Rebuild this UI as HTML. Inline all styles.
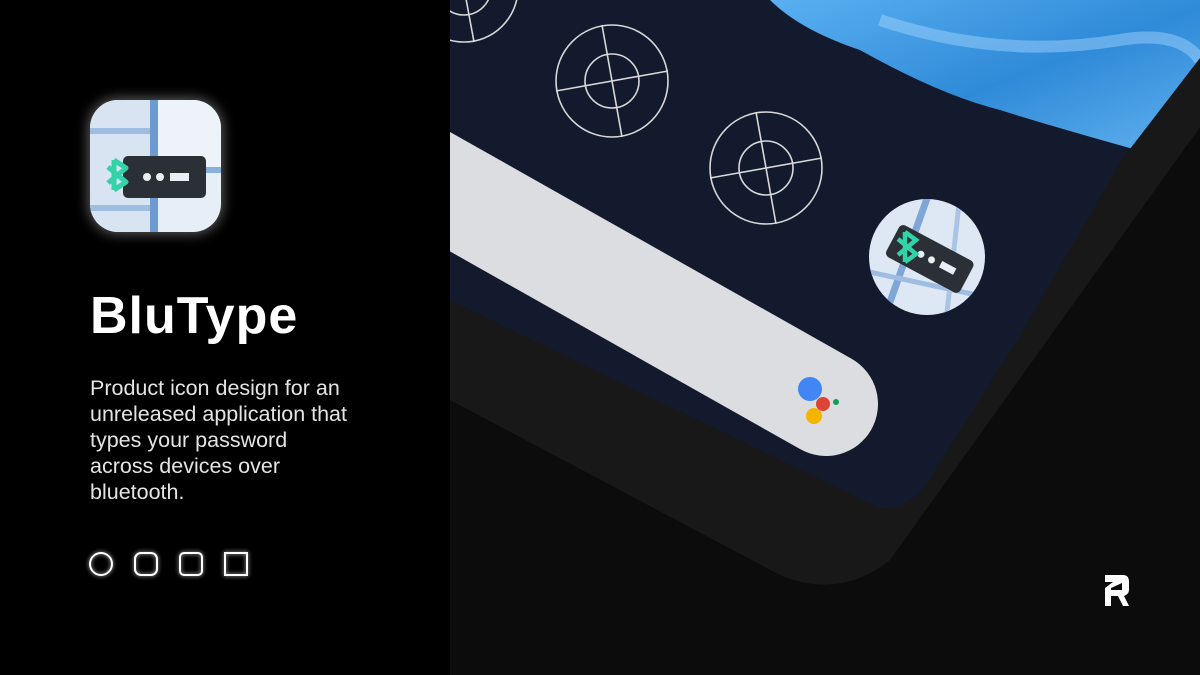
<!DOCTYPE html>
<html><head><meta charset="utf-8"><style>
*{margin:0;padding:0;box-sizing:border-box}
body{width:1200px;height:675px;overflow:hidden;background:#0c0c0c;font-family:"Liberation Sans",sans-serif;position:relative}
#left{position:absolute;left:0;top:0;width:450px;height:675px;background:#000}
h1{position:absolute;left:90px;top:286px;font-size:52px;font-weight:bold;color:#fff;letter-spacing:1px}
p{position:absolute;left:90px;top:375px;width:300px;font-size:21.5px;line-height:26px;color:#e4e4e4;white-space:nowrap}
</style></head><body>
<div id="left">
<svg width="450" height="675" style="position:absolute;left:0;top:0">
<defs>
<filter id="g" x="-50%" y="-50%" width="200%" height="200%"><feGaussianBlur stdDeviation="6"/></filter>
<filter id="g2" x="-50%" y="-50%" width="200%" height="200%"><feGaussianBlur stdDeviation="2"/></filter>
<clipPath id="ic"><rect x="90" y="100" width="131" height="132" rx="28"/></clipPath>
</defs>
<rect x="88" y="98" width="135" height="136" rx="30" fill="#fff" opacity="0.35" filter="url(#g)"/>
<g clip-path="url(#ic)">
<rect x="90" y="100" width="131" height="132" fill="#e6eef8"/>
<rect x="90" y="100" width="60" height="132" fill="#d8e4f2"/>
<rect x="150" y="100" width="8" height="132" fill="#6d9ad0"/>
<rect x="90" y="128" width="60" height="6" fill="#9fbde2"/>
<rect x="90" y="205" width="60" height="6" fill="#9fbde2"/>
<rect x="158" y="167" width="63" height="6" fill="#8ab0dc"/>
<rect x="158" y="100" width="63" height="67" fill="#eef3fa"/>
</g>
<rect x="123" y="156" width="83" height="42" rx="5" fill="#2b3036"/>
<path d="M114 160 L114 190 M114 160 L126 168 L108 183 M114 190 L126 182 L108 167" stroke="#33d2a8" stroke-width="5" fill="none" stroke-linejoin="round"/>
<circle cx="147" cy="177" r="4" fill="#e8eef4"/>
<circle cx="160" cy="177" r="4" fill="#e8eef4"/>
<rect x="170" y="173" width="19" height="8" fill="#e8eef4"/>
<g stroke="#fff" stroke-width="2" fill="none">
<g filter="url(#g2)" opacity="0.8"><circle cx="101" cy="564" r="11"/><rect x="135" y="553" width="22" height="22" rx="6"/><rect x="180" y="553" width="22" height="22" rx="4"/><rect x="225" y="553" width="22" height="22"/></g>
<circle cx="101" cy="564" r="11"/><rect x="135" y="553" width="22" height="22" rx="6"/><rect x="180" y="553" width="22" height="22" rx="4"/><rect x="225" y="553" width="22" height="22"/>
</g>
</svg>
<h1>BluType</h1>
<p>Product icon design for an<br>unreleased application that<br>types your password<br>across devices over<br>bluetooth.</p>
</div>
<svg width="750" height="675" viewBox="450 0 750 675" style="position:absolute;left:450px;top:0">
<defs>
<linearGradient id="wp" x1="0" y1="0" x2="1" y2="1"><stop offset="0" stop-color="#5ab0f0"/><stop offset="0.5" stop-color="#2f8ad8"/><stop offset="1" stop-color="#6ab8f2"/></linearGradient>
<clipPath id="scr"><path d="M450 0 L1210 0 L1210 45 L1123 158 L1017 340 L935 470 Q915 510 880 508 L450 300 Z"/></clipPath>
<clipPath id="ci"><circle cx="927" cy="257" r="58"/></clipPath>
</defs>
<path d="M450 290 L450 400 L780 575 Q840 600 890 560 L1205 120 L1205 0 Z" fill="#181818"/>
<path d="M450 0 L1210 0 L1210 45 L1123 158 L1017 340 L935 470 Q915 510 880 508 L450 300 Z" fill="#131a2d"/>
<g clip-path="url(#scr)">
<path d="M770 0 Q800 30 860 50 Q940 95 1000 110 Q1080 135 1210 170 L1220 170 L1220 0 Z" fill="url(#wp)"/>
<path d="M880 20 Q1000 60 1120 40 Q1180 30 1200 60" stroke="#a8d6ff" stroke-width="12" fill="none" opacity="0.45"/>
<line x1="300" y1="107" x2="826" y2="404" stroke="#dcdde1" stroke-width="104" stroke-linecap="round"/>
</g>
<g stroke="#d8d8d8" stroke-width="1.6" fill="none">
<circle cx="612" cy="81" r="56"/><circle cx="612" cy="81" r="27"/><line x1="556" y1="91" x2="668" y2="71"/><line x1="602" y1="25" x2="622" y2="137"/>
<circle cx="766" cy="168" r="56"/><circle cx="766" cy="168" r="27"/><line x1="710" y1="178" x2="822" y2="158"/><line x1="756" y1="112" x2="776" y2="224"/>
<circle cx="464" cy="-12" r="54"/><circle cx="464" cy="-12" r="27"/><line x1="454" y1="-66" x2="474" y2="42"/>
</g>
<circle cx="810" cy="389" r="12" fill="#4285f4"/>
<circle cx="823" cy="404" r="7" fill="#db4437"/>
<circle cx="836" cy="402" r="3" fill="#0f9d58"/>
<circle cx="814" cy="416" r="8" fill="#f4b400"/>
<g clip-path="url(#ci)">
<rect x="860" y="190" width="140" height="140" fill="#dde8f4"/>
<path d="M930 190 L880 330" stroke="#7ea7d8" stroke-width="7"/>
<path d="M860 270 L1000 300" stroke="#9fbde2" stroke-width="5"/>
<path d="M960 195 L945 330" stroke="#a9c4e4" stroke-width="5"/>
<g transform="rotate(28 928 258)"><rect x="888" y="240" width="84" height="36" rx="5" fill="#2b3036"/>
<circle cx="920" cy="258" r="3.5" fill="#e8eef4"/><circle cx="932" cy="258" r="3.5" fill="#e8eef4"/><rect x="942" y="254" width="16" height="7" fill="#e8eef4"/></g>
<path d="M905 232 L905 262 M905 232 L916 240 L898 255 M905 262 L916 254 L898 239" stroke="#33d2a8" stroke-width="4.5" fill="none"/>
</g>
<path d="M1105 575 L1123 575 Q1129 575 1129 582 L1129 590 Q1129 594 1124 596 L1129 606 L1123 606 L1118 596 L1111 596 L1111 606 L1105 606 L1105 588 L1113 582 L1105 582 Z M1111 588 L1111 590 L1122 590 L1122 583 Z" fill="#fff"/>
</svg>
</body></html>
